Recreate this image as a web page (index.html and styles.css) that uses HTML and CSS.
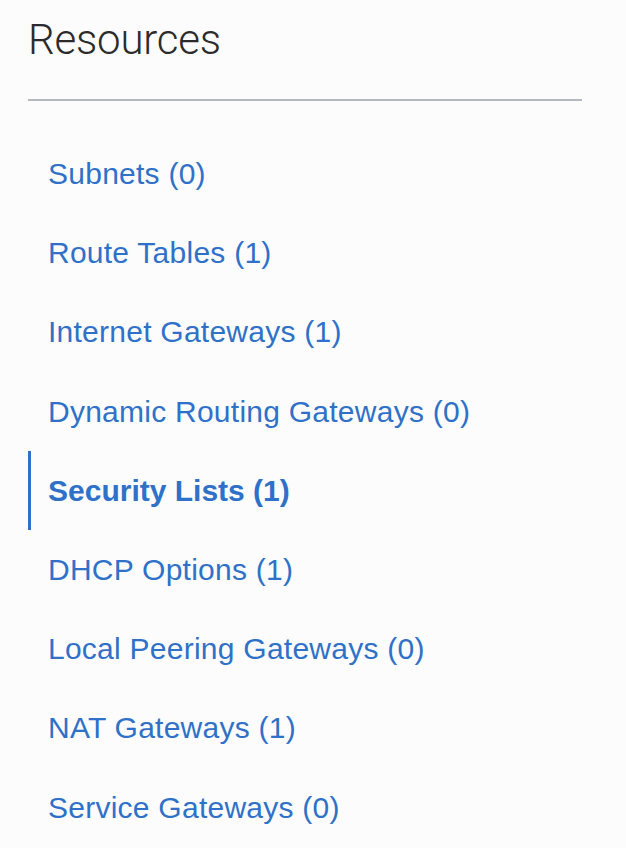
FILE: index.html
```html
<!DOCTYPE html>
<html>
<head>
<meta charset="utf-8">
<link rel="stylesheet" href="styles.css">
</head>
<body>
<div class="panel">
  <h1 class="title">Resources</h1>
  <div class="divider"></div>
  <ul class="nav">
    <li class="item"><a>Subnets (0)</a></li>
    <li class="item"><a>Route Tables (1)</a></li>
    <li class="item"><a>Internet Gateways (1)</a></li>
    <li class="item"><a>Dynamic Routing Gateways (0)</a></li>
    <li class="item active"><a>Security Lists (1)</a></li>
    <li class="item"><a>DHCP Options (1)</a></li>
    <li class="item"><a>Local Peering Gateways (0)</a></li>
    <li class="item"><a>NAT Gateways (1)</a></li>
    <li class="item"><a>Service Gateways (0)</a></li>
  </ul>
</div>
</body>
</html>
```
FILE: styles.css
```css
html, body {
  margin: 0;
  padding: 0;
  background: #fcfcfc;
}
.panel {
  width: 554px;
  padding: 16px 0 0 28px;
  font-family: "Liberation Sans", Arial, sans-serif;
}
.title {
  margin: 0;
  font-family: Roboto, "Liberation Sans", sans-serif;
  font-weight: 300;
  font-size: 42px;
  line-height: 48px;
  color: #2b2b2b;
  letter-spacing: -0.2px;
}
.divider {
  margin-top: 35px;
  height: 2px;
  background: #b5b9bf;
}
.nav {
  list-style: none;
  margin: 33px 0 0 0;
  padding: 0;
}
.item {
  height: 79.2px;
  line-height: 79.5px;
  padding-left: 20px;
  font-size: 30px;
  letter-spacing: 0.25px;
  color: #2f71c8;
}
.item.active {
  padding-left: 17px;
  border-left: 3px solid #2f71c8;
  font-weight: bold;
  letter-spacing: 0;
}
```
